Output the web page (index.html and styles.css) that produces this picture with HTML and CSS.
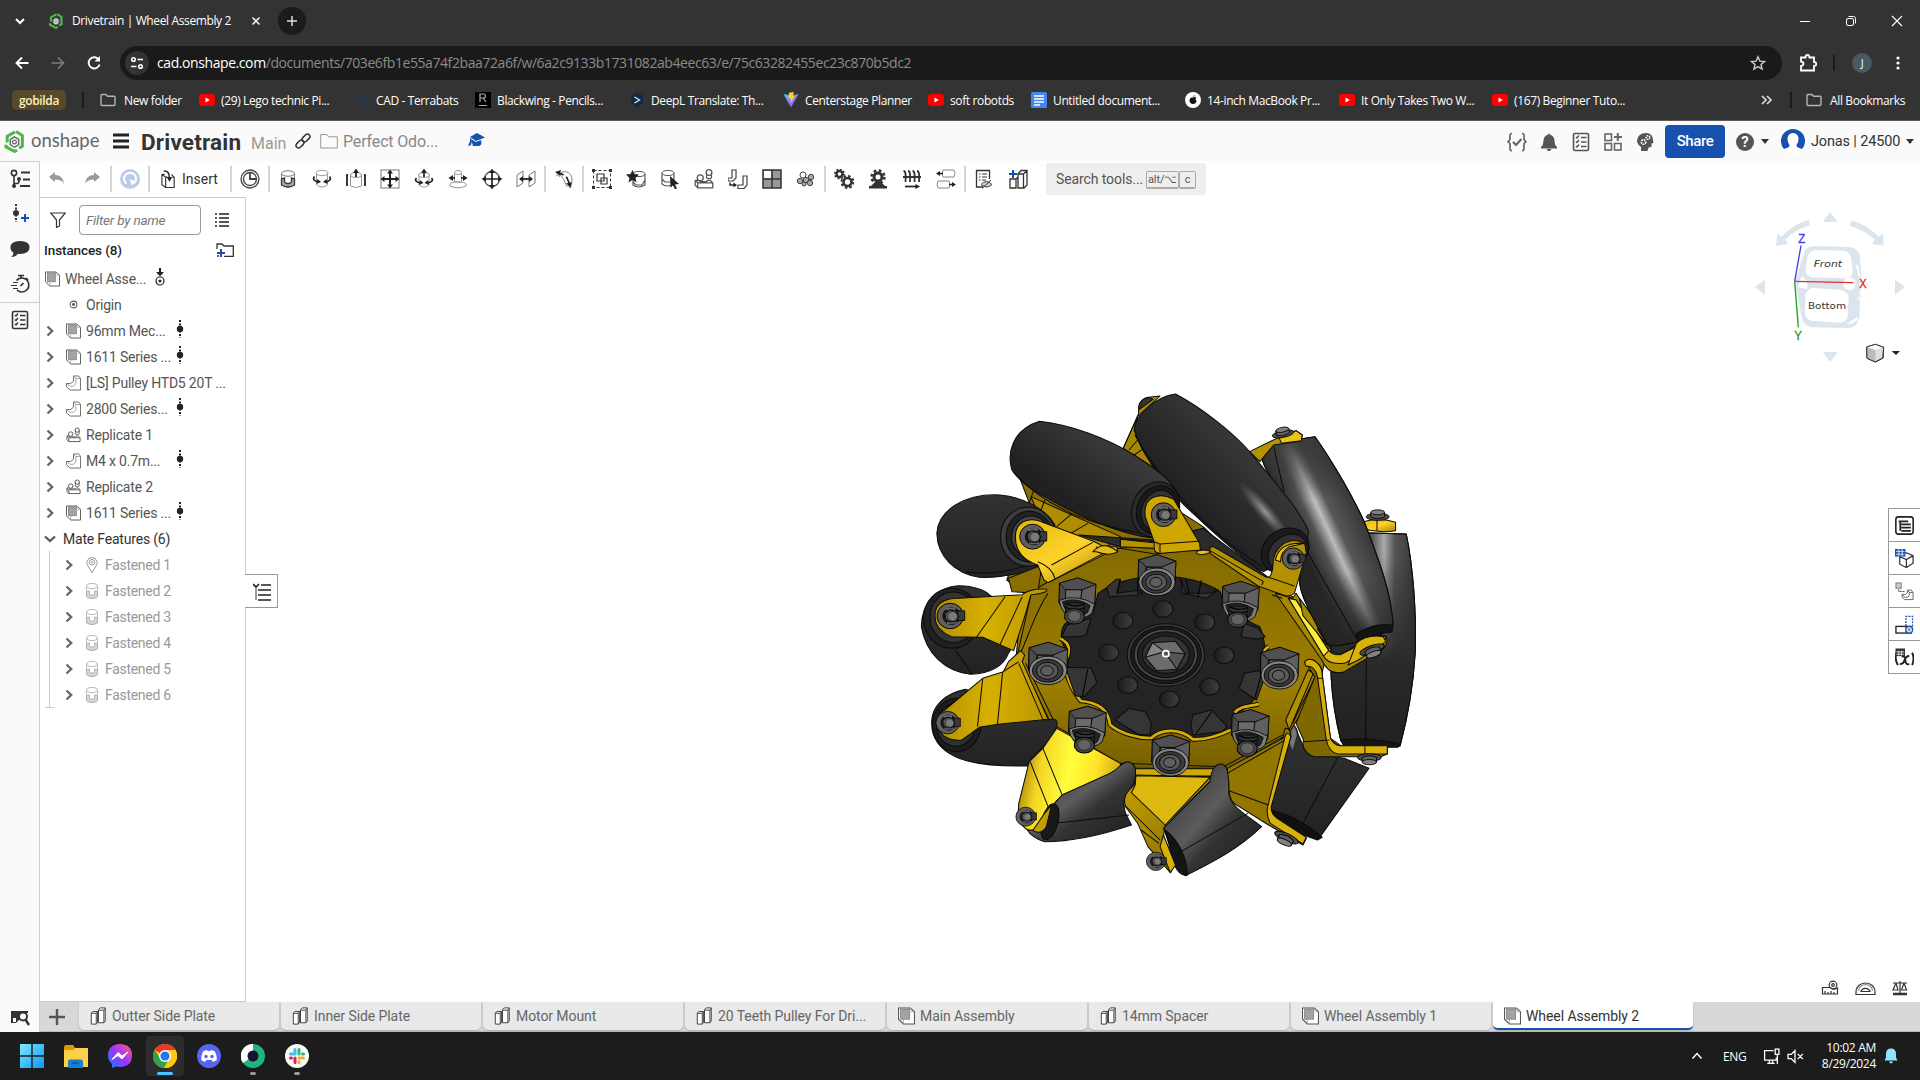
FILE: index.html
```html
<!DOCTYPE html>
<html lang="en">
<head>
<meta charset="utf-8">
<title>Drivetrain | Wheel Assembly 2</title>
<link rel="stylesheet" href="styles.css">
</head>
<body>
<svg class="defs" aria-hidden="true">
  <defs>
    <linearGradient id="gRubber" x1="0" y1="1" x2="1" y2="0"><stop offset=".35" stop-color="#212121"/><stop offset=".75" stop-color="#3d3d3d"/><stop offset="1" stop-color="#444"/></linearGradient>
    <linearGradient id="gDeep" x1="0" y1="0" x2="0" y2="1"><stop offset="0" stop-color="#323232"/><stop offset="1" stop-color="#222"/></linearGradient>
    <linearGradient id="gBright" x1="0" y1="0" x2="1" y2="1"><stop offset="0" stop-color="#e2b90a"/><stop offset=".5" stop-color="#ffd22a"/><stop offset="1" stop-color="#a38300"/></linearGradient>
    <linearGradient id="gLemon" x1="0" y1=".3" x2="1" y2=".5"><stop offset="0" stop-color="#8f7300"/><stop offset=".22" stop-color="#f5d524"/><stop offset=".5" stop-color="#ffff3c"/><stop offset=".75" stop-color="#ffe428"/><stop offset="1" stop-color="#cda907"/></linearGradient>
    <linearGradient id="gGold" x1="0" y1="0" x2="1" y2="0"><stop offset="0" stop-color="#b39000"/><stop offset=".45" stop-color="#d8b000"/><stop offset="1" stop-color="#b99600"/></linearGradient>
    <linearGradient id="gOlive" x1="0" y1="0" x2="1" y2="1"><stop offset="0" stop-color="#c7a200"/><stop offset="1" stop-color="#7c6400"/></linearGradient>
    <linearGradient id="gRing" x1="0" y1="0" x2="0" y2="1"><stop offset="0" stop-color="#856b00"/><stop offset=".6" stop-color="#9c7e00"/><stop offset="1" stop-color="#735c00"/></linearGradient>
    <linearGradient id="gSheen" gradientUnits="userSpaceOnUse" x1="1170" y1="510" x2="1350" y2="430"><stop offset="0" stop-color="#242424"/><stop offset=".28" stop-color="#555"/><stop offset=".46" stop-color="#c8c8c8"/><stop offset=".62" stop-color="#5a5a5a"/><stop offset="1" stop-color="#383838"/></linearGradient>
    <linearGradient id="gFade" x1="0" y1="0" x2="0" y2="1"><stop offset="0" stop-color="#3a3a3a"/><stop offset=".3" stop-color="#2b2b2b" stop-opacity=".05"/><stop offset=".65" stop-color="#2b2b2b" stop-opacity=".1"/><stop offset="1" stop-color="#242424"/></linearGradient>
    <linearGradient id="gSide" gradientUnits="userSpaceOnUse" x1="1290" y1="0" x2="1500" y2="0"><stop offset="0" stop-color="#252525"/><stop offset=".38" stop-color="#555"/><stop offset=".55" stop-color="#aaa"/><stop offset=".7" stop-color="#555"/><stop offset="1" stop-color="#333"/></linearGradient>
    <linearGradient id="gDown" x1="0" y1="0" x2="0" y2="1"><stop offset=".1" stop-color="#2a2a2a" stop-opacity="0"/><stop offset=".6" stop-color="#2a2a2a"/><stop offset="1" stop-color="#202020"/></linearGradient>
    <linearGradient id="gGrey" x1="0" y1="0" x2="1" y2="1"><stop offset="0" stop-color="#2c2c2c"/><stop offset=".45" stop-color="#5c5c5c"/><stop offset=".6" stop-color="#333"/><stop offset="1" stop-color="#1d1d1d"/></linearGradient>
    <radialGradient id="gGlow"><stop offset="0" stop-color="#aaa" stop-opacity=".85"/><stop offset="1" stop-color="#777" stop-opacity="0"/></radialGradient>
    <linearGradient id="gHole" x1="0" y1="0" x2="1" y2="0"><stop offset="0" stop-color="#1c1c1c"/><stop offset="1" stop-color="#3e3e3e"/></linearGradient>
    <linearGradient id="gWin" x1="0" y1="0" x2="1" y2="1"><stop offset="0" stop-color="#7ceafd"/><stop offset="1" stop-color="#0b95f4"/></linearGradient>
    <linearGradient id="gMsg" x1="0" y1="1" x2="1" y2="0"><stop offset="0" stop-color="#0a80ff"/><stop offset=".5" stop-color="#a033ff"/><stop offset="1" stop-color="#ff5f6d"/></linearGradient>
    <linearGradient id="gVite" x1="0" y1="0" x2="1" y2="1"><stop offset="0" stop-color="#41d1ff"/><stop offset="1" stop-color="#bd34fe"/></linearGradient>
  </defs>

  <symbol id="mark" viewBox="0 0 20 22"><path d="M10.500 1.800 3 6v6M1.800 14v2.200L10 20.500l2.500-1.300" fill="none" stroke="#4db848" stroke-width="2.900"/><path d="M11.500 1.500l6 3.800v10.200l-3 1.800" fill="none" stroke="#4db848" stroke-width="2.900"/><path d="M10 6.500 14 9v5l-4 2.500L6 14V9z" fill="#fff" stroke="#666" stroke-width="1.400"/><circle cx="10" cy="11.500" r="1.800" fill="none" stroke="#666" stroke-width="1.200"/></symbol>
  <symbol id="yt" viewBox="0 0 16 16"><rect y="2" width="16" height="12" rx="3.200" fill="red"/><path d="M6.500 5.500 10.800 8l-4.300 2.500z" fill="#fff"/></symbol>
  <symbol id="dir" viewBox="0 0 16 16"><path d="M1 3.500q0-1 1-1h4l1.600 1.800H14q1 0 1 1V12.500q0 1-1 1H2q-1 0-1-1z" fill="none" stroke="#b4b4b4" stroke-width="1.400"/></symbol>

  <symbol id="chev" viewBox="0 0 10 12"><path d="M2.500 1.500 7.200 6l-4.700 4.500" fill="none" stroke="#666" stroke-width="2.300"/></symbol>
  <symbol id="asm" viewBox="0 0 16 16"><path d="M.5.500h11l4 3.500v11.500H5L.5 11z" fill="#fff" stroke="#555"/><path d="M5 11.500v4M11.500.5v2M12 4h3.500" stroke="#999" fill="none" stroke-width=".8"/><rect x="2.500" y="1.500" width="8.500" height="9.500" fill="#a3a3a3" stroke="#777" stroke-width=".7"/></symbol>
  <symbol id="part" viewBox="0 0 16 16"><path d="M8 .5h5.500l2 2.500v12.500H4.500L.5 12V8.500H5L8 6z" fill="#fff" stroke="#666"/><path d="M8 .5l2.500 2.700h5M10.500 3.200V9L8 11.500H4.500l-4-3" fill="none" stroke="#888" stroke-width=".8"/></symbol>
  <symbol id="rep" viewBox="0 0 16 16"><path d="M1 9h3l1 1h5l1-1h2l2 2v4H3l-2-2zM3 11h12M3 11v4M1 9l2 2" fill="none" stroke="#555"/><circle cx="5" cy="7" r="2.400" fill="#fff" stroke="#555"/><circle cx="12" cy="2.800" r="2.300" fill="#fff" stroke="#555"/><path d="M10 3v4q2 1.500 4 0V3" fill="none" stroke="#555" stroke-width=".9"/></symbol>
  <symbol id="dof" viewBox="0 0 14 18"><circle cx="7" cy="9" r="3.200" fill="#222"/><path d="M7 0v18" stroke="#222" stroke-width="2" stroke-dasharray="2 1.500"/></symbol>
  <symbol id="fast" viewBox="0 0 16 18"><path d="M2.500 4v10.500q5.500 4 11 0V4z" fill="#fff" stroke="#bbb"/><path d="M2.500 9.500v5q5.500 4 11 0v-5l-3-.5v2.500L9.500 13h-3l-1-1.500V9z" fill="#d6d6d6" stroke="#aaa" stroke-width=".8"/><ellipse cx="8" cy="4" rx="5.500" ry="2.600" fill="#fff" stroke="#bbb"/></symbol>
  <symbol id="pin" viewBox="0 0 16 18"><path d="M8 16.500 4 10Q2.500 7.500 3 5.500 4.200 1.500 8 1.500t5 4q.5 2-1 4.500z" fill="#fff" stroke="#999"/><circle cx="8" cy="6.300" r="2.800" fill="none" stroke="#999"/><circle cx="8" cy="6.300" r="1" fill="#999"/></symbol>
  <symbol id="studio" viewBox="0 0 18 20"><path d="M1 6.500 3 5h5v12l-1.500 2H1zM1 7h5.500v12M6.500 7 8 5M9 3l2-2h5.500v14.500L15 17.500H9zM9 3.500h6v14M15 3.500l1.500-2" fill="#fff" stroke="#444" stroke-width="1.100"/></symbol>

  <symbol id="nutA" viewBox="0 0 120 130" overflow="visible"><path d="M5 18 60 2l55 20-3 68-20 20H26L3 84z" fill="#4a4a4a" stroke="#000" stroke-width="3"/><path d="M5 18 60 2l55 20-43 18-45-1z" fill="#505050" stroke="#000" stroke-width="2"/><path d="M29 40h43l-4 36H26z" fill="#6d6d6d"/><path d="M73 40 115 22l-3 66-44-12z" fill="#5f5f5f" stroke="#000" stroke-width="2"/><path d="M5 18l22 21-3 38-20 6z" fill="#4c4c4c" stroke="#000" stroke-width="2"/><ellipse cx="59" cy="85" rx="54" ry="42" fill="#868686" stroke="#000" stroke-width="2.500"/><ellipse cx="58" cy="86" rx="44" ry="34" fill="#3a3a3a" stroke="#000" stroke-width="2.500"/><ellipse cx="57" cy="86" rx="31" ry="25" fill="#585858" stroke="#000" stroke-width="2.500"/><ellipse cx="56" cy="86" rx="18" ry="15" fill="#5d5d5d" stroke="#000" stroke-width="2.500"/></symbol>
  <symbol id="nutB" viewBox="0 0 120 150" overflow="visible"><path d="M5 18 60 2l55 20-4 70-20 14H26L3 80z" fill="#4a4a4a" stroke="#000" stroke-width="3"/><path d="M5 18 60 2l55 20-43 18-50-1z" fill="#505050" stroke="#000" stroke-width="2"/><path d="M24 39h48l-2 32-48 3z" fill="#6b6b6b"/><path d="M73 40 115 22l-4 62-42-10z" fill="#606060" stroke="#000" stroke-width="2"/><path d="M4 72q52-22 107 12l-8 28q-20 18-51 18Q10 118 4 72z" fill="#7c7c7c" stroke="#000" stroke-width="2.500"/><path d="M14 76q42-16 84 12l-8 22q-16 14-40 14Q20 110 14 76z" fill="#242424" stroke="#000" stroke-width="2"/><path d="M24 80h56l-2 50H22z" fill="#333"/><path d="M26 82q26 14 54 2M24 94q26 14 54 2M23 106q27 14 54 2" fill="none" stroke="#050505" stroke-width="4"/><ellipse cx="50" cy="122" rx="30" ry="24" fill="#474747" stroke="#000" stroke-width="3"/><ellipse cx="50" cy="121" rx="20" ry="17" fill="#626262" stroke="#111" stroke-width="2"/></symbol>
  <symbol id="clip" viewBox="-45 -45 90 90" overflow="visible"><circle r="40" fill="#606060" stroke="#000" stroke-width="3"/><circle cx="4" r="27" fill="#1e1e1e" stroke="#000" stroke-width="2"/><path d="M22-16h22v30H22z" fill="#3a3a3a"/><path d="M-14-22 12-24V-8M-10 22 20 20" stroke="#666" stroke-width="7" fill="none"/><path d="M-16-8-2-19 16-16 26 2 16 18-4 18-15 8z" fill="#5b5b5b" stroke="#000" stroke-width="3"/><circle cx="7" cy="1" r="15" fill="#7a7a7a" stroke="#111" stroke-width="2"/></symbol>
  <symbol id="stud" viewBox="-45 -30 90 60" overflow="visible"><ellipse cy="4" rx="40" ry="13" fill="#4c4c4c" stroke="#000" stroke-width="3"/><path d="M-24-12v16q24 12 48 0v-16z" fill="#606060" stroke="#000" stroke-width="3"/><ellipse cy="-12" rx="24" ry="9" fill="#808080" stroke="#000" stroke-width="3"/></symbol>
</svg>

<div class="screen">
<header class="chrome">
  <div class="strip">
    <svg class="i10 tabsearch" viewBox="0 0 10 10"><path d="M1 3l4 4 4-4" fill="none" stroke="#fff" stroke-width="2"/></svg>
    <svg class="fav"><use href="#mark"/></svg>
    <span class="tabtitle">Drivetrain | Wheel Assembly 2</span>
    <svg class="i10 tabclose" viewBox="0 0 10 10"><path d="M1.500 1.500l7 7M8.500 1.500l-7 7" stroke="#e6e6e6" stroke-width="1.700"/></svg>
    <span class="newtab"><svg class="i10" viewBox="0 0 10 10"><path d="M5 0v10M0 5h10" stroke="#ddd" stroke-width="1.500"/></svg></span>
    <span class="grow"></span>
    <span class="winbtns">
      <svg viewBox="0 0 12 12"><path d="M1 6.500h10" stroke="#fff"/></svg>
      <svg viewBox="0 0 12 12"><rect x="1.500" y="3.500" width="7" height="7" rx="1.500" fill="none" stroke="#fff"/><path d="M3.500 1.500h5q2 0 2 2v5" fill="none" stroke="#fff"/></svg>
      <svg viewBox="0 0 12 12"><path d="M1 1l10 10M11 1 1 11" stroke="#fff" stroke-width="1.100"/></svg>
    </span>
  </div>
  <div class="nav">
    <svg class="i16" viewBox="0 0 16 16"><path d="M14.500 8H3M8 2.500 2.500 8 8 13.500" fill="none" stroke="#fff" stroke-width="1.900"/></svg>
    <svg class="i16" viewBox="0 0 16 16"><path d="M1.500 8H13M8 2.500 13.500 8 8 13.500" fill="none" stroke="#7d7d7d" stroke-width="1.700"/></svg>
    <svg class="i16" viewBox="0 0 16 16"><path d="M13 4.800A5.600 5.600 0 1 0 13.600 9.500" fill="none" stroke="#fff" stroke-width="1.900"/><path d="M14 1v5.500H8.500z" fill="#fff"/></svg>
    <div class="omni">
      <span class="site"><svg viewBox="0 0 14 14"><g fill="none" stroke="#fff" stroke-width="1.500"><circle cx="3.500" cy="3.500" r="1.800"/><path d="M7.500 3.500H13M1 10.500h5.500"/><circle cx="10.500" cy="10.500" r="1.800"/></g></svg></span>
      <span class="url"><b>cad.onshape.com</b>/documents/703e6fb1e55a74f2baa72a6f/w/6a2c9133b1731082ab4eec63/e/75c63282455ec23c870b5dc2</span>
      <svg class="i16" viewBox="0 0 16 16"><path d="M8 1.800l1.900 4.300 4.600.4-3.500 3 1.100 4.600L8 11.600l-4.100 2.500L5 9.500l-3.500-3 4.600-.4z" fill="none" stroke="#ccc" stroke-width="1.400"/></svg>
    </div>
    <svg class="i18 ext" viewBox="0 0 18 18"><path d="M2 3.500h4.500Q6.500 1 8.500 1t2 2.500H15V8q2.300 0 2.300 2T15 12v4.500H2V12q2.500-.5 2.500-2.300T2 7.500z" fill="none" stroke="#fff" stroke-width="1.800"/></svg>
    <i class="bar navbar"></i>
    <span class="me">J</span>
    <svg class="i16" viewBox="0 0 16 16"><g fill="#fff"><circle cx="8" cy="3" r="1.600"/><circle cx="8" cy="8" r="1.600"/><circle cx="8" cy="13" r="1.600"/></g></svg>
  </div>
  <div class="marks">
    <span class="grp">gobilda</span><i class="bar"></i>
    <span><svg><use href="#dir"/></svg><em class="far">New folder</em></span>
    <span><svg><use href="#yt"/></svg>(29) Lego technic Pi...</span>
    <span><svg viewBox="0 0 16 16"><path d="M1.500 3 5 13 8 5l3 8 3.500-10" fill="none" stroke="#27364a" stroke-width="2.600"/></svg>CAD - Terrabats</span>
    <span><svg viewBox="0 0 16 16"><rect width="16" height="16" fill="#000"/><path d="M5 10V2h3.500q2 0 2 2t-2 2H5m3 0 3 4M4 13.500h8" fill="none" stroke="#aaa" stroke-width="1.200"/></svg>Blackwing - Pencils...</span>
    <span><svg viewBox="0 0 16 16"><path d="M8 .5l6 3.500v7L8 15.500 2 11V4z" fill="#0f2b46"/><path d="M5.500 5l5 3-5 3" fill="none" stroke="#d8e6f5" stroke-width="1.300"/></svg>DeepL Translate: Th...</span>
    <span><svg viewBox="0 0 16 16"><path d="M.5 2 8 15.500 15.500 2 8 3.500z" fill="url(#gVite)"/><path d="M6 .8l5-.8-1 4h2L7.500 11l.5-4.500H5.500z" fill="#ffcf2b"/></svg>Centerstage Planner</span>
    <span><svg><use href="#yt"/></svg>soft robotds</span>
    <span><svg viewBox="0 0 16 16"><rect width="16" height="16" rx="1.500" fill="#4285f4"/><path d="M3 4h10M3 7h10M3 10h10M3 13h6" stroke="#fff" stroke-width="1.500"/></svg>Untitled document...</span>
    <span><svg viewBox="0 0 16 16"><circle cx="8" cy="8" r="8" fill="#fff"/><path d="M8 5.500q2-1.200 3.400.3-1.600 1.500.3 3.500Q10.200 12.600 8 11.800 5.700 12.700 4.500 9.300 4.200 5 8 5.500zM8 5q0-1.500 1.600-2Q9.700 4.500 8 5z" fill="#111"/></svg>14-inch MacBook Pr...</span>
    <span><svg><use href="#yt"/></svg>It Only Takes Two W...</span>
    <span><svg><use href="#yt"/></svg>(167) Beginner Tuto...</span>
    <span><svg viewBox="0 0 16 16"><path d="M3 4l4 4-4 4M8 4l4 4-4 4" fill="none" stroke="#ddd" stroke-width="1.700"/></svg></span><i class="bar"></i>
    <span><svg><use href="#dir"/></svg><em class="far">All Bookmarks</em></span>
  </div>
</header>

<div class="dochead">
  <svg class="logo"><use href="#mark"/></svg><span class="brand">onshape</span>
  <svg class="burger" viewBox="0 0 16 16"><path d="M0 2h16M0 8h16M0 14h16" stroke="#222" stroke-width="2.800"/></svg>
  <h1>Drivetrain</h1><span class="ws">Main</span>
  <svg class="i16 link" viewBox="0 0 16 16"><g fill="none" stroke="#333" stroke-width="1.500"><rect x="6.500" y="2.500" width="9" height="5" rx="2.500" transform="rotate(-45 11 5)"/><rect x=".5" y="8.500" width="9" height="5" rx="2.500" transform="rotate(-45 5 11)"/></g></svg>
  <svg class="i18 crumb" viewBox="0 0 18 16"><path d="M.7 15V1.500h6l1.800 2.300h8.800V15z" fill="none" stroke="#999"/></svg><span class="folder">Perfect Odo...</span>
  <svg class="i18 cap" viewBox="0 0 18 18"><path d="M10 1l8 4.500-9 3.500L3 5z" fill="#1651b0"/><path d="M4 7l5 3 5-2 .5 4-2 2H6z" fill="#1651b0"/><path d="M3 5v4l-2 5 3-1 1-4" fill="#1651b0"/></svg>
  <span class="grow"></span>
  <div class="acts">
    <svg viewBox="0 0 20 20"><path d="M5 1.500Q2.500 1.500 3 5t-2.500 5Q3.500 10 3 14.500T5 18.500M15 1.500q2.500 0 2 3.500t2.500 5q-3 0-2.500 4.500t-2 4" fill="none" stroke="#666" stroke-width="1.700"/><path d="M6 10l3 3 5.500-6" fill="none" stroke="#666" stroke-width="2.200"/></svg>
    <svg viewBox="0 0 20 20"><path d="M10 1l1 1.800Q15.500 4 15.500 9q0 4 2.500 6v1.500H2V15q2.500-2 2.500-6Q4.500 4 9 2.800zM7.500 17h5L11 19H9z" fill="#555"/></svg>
    <svg viewBox="0 0 20 20"><rect x="2.500" y="1.500" width="15" height="17" rx="1.500" fill="none" stroke="#555" stroke-width="1.600"/><path d="M5 5l1 1 2-2.500M5 9.500l1 1L8 8M5 14l1 1 2-2.500M10 5.500h5.500M10 10h5.500M10 14.500h5.500" fill="none" stroke="#555" stroke-width="1.500"/></svg>
    <svg viewBox="0 0 20 20"><g fill="none" stroke="#666" stroke-width="1.600"><rect x="2" y="2" width="6.500" height="6.500"/><rect x="2" y="11.500" width="6.500" height="6.500"/><rect x="11.500" y="11.500" width="6.500" height="6.500"/><path d="M14.800 1v8M11 5h8" stroke-width="2"/></g></svg>
    <svg viewBox="0 0 20 20"><path d="M11 1q6.500 0 7 7l.5 3-2 .5v3.500l-3 .5-1 3.500H6v-4Q2 12 2 8.500 3 1 11 1z" fill="#555"/><g fill="none" stroke="#fff" stroke-width="1.600"><circle cx="8.500" cy="10" r="2.200" stroke-dasharray="1.600 .8"/><circle cx="13" cy="5.500" r="1.800" stroke-dasharray="1.400 .7"/></g></svg>
  </div>
  <span class="share">Share</span>
  <span class="help">?</span><i class="caret"></i>
  <svg class="avatar" viewBox="0 0 24 24"><circle cx="12" cy="12" r="12" fill="#1651b0"/><path d="M12 4q5.500 0 5.500 6.500 0 3-2 5.500l.5 2 6 2.500-5 4.500H7l-5-4.500L8 18l.5-2q-2-2.500-2-5.500Q6.500 4 12 4z" fill="#fff"/></svg>
  <span class="user">Jonas | 24500</span><i class="caret"></i>
</div>

<div class="work">
  <aside class="rail">
    <svg viewBox="0 0 20 20"><g fill="none" stroke="#333" stroke-width="1.600"><circle cx="4" cy="4" r="2.600"/><path d="M4 7v11M4 14.500h3q2 0 2-3"/></g><circle cx="9" cy="10" r="2" fill="#333"/><circle cx="4" cy="17" r="2" fill="#333"/><path d="M11 3.500h9M13 10.500h7M10 17h10" stroke="#333" stroke-width="2"/></svg>
    <svg viewBox="0 0 20 20"><circle cx="6" cy="9" r="3" fill="#333"/><path d="M6 0v18" stroke="#333" stroke-width="2" stroke-dasharray="2 1.500"/><path d="M11 14h8M15 10v8" stroke="#1651b0" stroke-width="2"/></svg>
    <svg viewBox="0 0 20 20"><path d="M10 2q9.500 0 9.500 6.500T10 15l-2-.3Q6 18 1 18q2.500-1.500 2.500-4.500Q.5 12 .5 8.500.5 2 10 2z" fill="#333"/></svg>
    <svg viewBox="0 0 20 20"><g fill="none" stroke="#333" stroke-width="1.700"><path d="M6.500 6.500A7 7 0 1 1 7 16"/><path d="M8 1.500h6M11 1.500V4M16 4l2 2M10.500 12l3-3"/><path d="M3 8.500h5M1 11.500h6M3 14.500h5" stroke-width="1.200"/></g></svg>
    <i></i>
    <svg viewBox="0 0 20 20"><rect x="2.500" y="1.500" width="15" height="17" rx="1.500" fill="none" stroke="#333" stroke-width="1.600"/><path d="M5 5l1 1 2-2.500M5 9.500l1 1L8 8M5 14l1 1 2-2.500M10 5.500h5.500M10 10h5.500M10 14.500h5.500" fill="none" stroke="#333" stroke-width="1.500"/></svg>
    <span class="grow"></span>
    <svg class="railfind" viewBox="0 0 20 20"><path d="M1 4h17v2H14q-5 1-5 7l-3 3H1z" fill="#333"/><rect x="3" y="11" width="3" height="4" fill="#fff"/><circle cx="13" cy="9.500" r="4" fill="#fff" stroke="#333" stroke-width="2"/><path d="M15.500 12.500 19 18" stroke="#333" stroke-width="2.500"/></svg>
  </aside>
  <div class="main">
    <div class="tools">
      <svg viewBox="0 0 20 20"><path d="M2 8l6-5v3q8 0 9 9-2-4.500-9-4.500V13z" fill="#999"/></svg>
      <svg viewBox="0 0 20 20"><path d="M18 8l-6-5v3q-8 0-9 9 2-4.500 9-4.500V13z" fill="#999"/></svg><i></i>
      <svg viewBox="0 0 20 20"><circle cx="10" cy="10" r="10" fill="#b9cde8"/><path d="M6.500 14.500A6 6 0 1 1 13.500 14.500" fill="none" stroke="#fff" stroke-width="2"/><path d="M9.500 10.500 16 12l-4 4.500z" fill="#fff"/></svg><i></i>
      <span class="insert"><svg viewBox="0 0 18 20"><path d="M2 5h3M2 5v11l4 3h9V8l-3-3M2 5l4 3h2M6 8v11M13 8h2" fill="none" stroke="#333" stroke-width="1.200"/><path d="M4 1.500q6-.5 6 7.500" fill="none" stroke="#222" stroke-width="1.600"/><path d="M7 8h6l-3 5z" fill="#222"/></svg>Insert</span><i></i>
      <svg viewBox="0 0 20 20"><g fill="#eee" stroke="#444" stroke-width="1.300"><circle cx="10" cy="10" r="9"/><circle cx="10" cy="10" r="6.500" fill="#fff"/><path d="M10 3.500V10h6.500" fill="none" stroke-width="1.800"/></g></svg><i></i>
      <svg viewBox="0 0 20 20"><path d="M3.500 5v11q6.500 4 13 0V5z" fill="#fff" stroke="#777"/><path d="M3.500 10v6q6.500 4 13 0v-6l-3-1v4l-2 1.500h-3L6.500 13V9z" fill="#aaa" stroke="#333" stroke-width="1.300"/><ellipse cx="10" cy="4.500" rx="6.500" ry="2.700" fill="#fff" stroke="#777"/></svg>
      <svg viewBox="0 0 20 20"><path d="M4.500 4v12q5.500 4 11 0V4" fill="#fff" stroke="#999"/><ellipse cx="10" cy="4" rx="6" ry="2.700" fill="#fff" stroke="#999"/><path d="M2.500 7.500q-3 4 4 5.500M17.500 7.500q3 4-4 5.500" fill="none" stroke="#222" stroke-width="1.700"/><path d="M5.500 10l3.500 3-4.500 2zM14.500 10 11 13l4.500 2z" fill="#222"/></svg>
      <svg viewBox="0 0 20 20"><path d="M4.500 6v11q5.500 3 11 0V6" fill="#fff" stroke="#999"/><ellipse cx="10" cy="6" rx="5.500" ry="2.500" fill="#fff" stroke="#999"/><path d="M1 5v12M19 5v12M10 2v6" stroke="#222" stroke-width="1.800"/><path d="M10-.5l3 4.500H7z" fill="#222"/></svg>
      <svg viewBox="0 0 20 20"><rect x="1" y="1" width="18" height="18" fill="#fff" stroke="#777"/><path d="M10 3v14M3 10h14" stroke="#222" stroke-width="2"/><path d="M10 .5l3 4H7zM10 19.500l3-4H7zM.5 10l4-3v6zM19.500 10l-4-3v6z" fill="#222"/></svg>
      <svg viewBox="0 0 20 20"><path d="M5 6v10q5 4 10 0V6" fill="#fff" stroke="#999"/><ellipse cx="10" cy="6" rx="5.500" ry="2.500" fill="#fff" stroke="#999"/><path d="M2.500 9q-3 3.500 4 5M17.500 9q3 3.500-4 5M10 2v6" fill="none" stroke="#222" stroke-width="1.700"/><path d="M10-.5l3 4.500H7zM6 11l3.500 3-4.500 2zM14 11l-3.500 3 4.500 2z" fill="#222"/></svg>
      <svg viewBox="0 0 20 20"><path d="M6.500 4v9h7V4M2 15v2q8 3.500 16 0v-2q-1-1.500-4.500-2h-7Q3 13.500 2 15z" fill="#fff" stroke="#999"/><ellipse cx="10" cy="3.500" rx="3.500" ry="2" fill="#fff" stroke="#999"/><path d="M2.500 9H7M13 9h4.500" stroke="#222" stroke-width="1.700"/><path d="M.5 9 5 6v6zM19.500 9 15 6v6z" fill="#222"/></svg>
      <svg viewBox="0 0 20 20"><circle cx="10" cy="10" r="7.500" fill="none" stroke="#555" stroke-width="1.300"/><path d="M10 2v16M2 10h16" stroke="#222" stroke-width="1.700"/><path d="M10-.5l3 4.500H7zM10 20.500l3-4.500H7zM-.5 10 4 7v6zM20.500 10 16 7v6z" fill="#222"/></svg>
      <svg viewBox="0 0 20 20"><path d="M1 6l6-4v12l-6 4zM13 6l6-4v12l-6 4z" fill="none" stroke="#777"/><path d="M4 10h12" stroke="#222" stroke-width="1.800"/><path d="M3 10l4-3v6zM17 10l-4-3v6z" fill="#222"/></svg><i></i>
      <svg viewBox="0 0 20 20"><path d="M2 7q4-4 8 4l3 7M8 3q8-2 10 6 1 6-3 10M5 8l3-5" fill="none" stroke="#888"/><path d="M5 4q6 2 8 5l2.500 6" fill="none" stroke="#222" stroke-width="1.600" stroke-dasharray="5 3 9"/><path d="M1 3l6-2-1.500 5.500zM17 19l-5-4.500 5.500-1.500z" fill="#222"/></svg><i></i>
      <svg viewBox="0 0 20 20"><rect x="1.500" y="1.500" width="17" height="17" fill="none" stroke="#333" stroke-dasharray="3 2"/><path d="M0 0h3v3H0zM17 0h3v3h-3zM0 17h3v3H0zM17 17h3v3h-3z" fill="#333"/><path d="M5 5h7v7H5zM9 9h6v6H9z" fill="#fff" stroke="#333" stroke-width="1.200"/></svg>
      <svg viewBox="0 0 20 20"><path d="M7 5v11q5 4 12 0V5M7 13l3 3h6l3-5" fill="#fff" stroke="#555" stroke-width="1.200"/><ellipse cx="13" cy="5" rx="6" ry="2.600" fill="#fff" stroke="#555"/><path d="M6.500 1l2 4 4.500.5L9.500 9l1 4.500-4-2.500-4 2.500 1-4.500L0 5.500 4.500 5z" fill="#222"/></svg>
      <svg viewBox="0 0 20 20"><path d="M2 4v11q5 4 12 0V4M2 10l3 3h6l3-3" fill="#fff" stroke="#555" stroke-width="1.200"/><ellipse cx="8" cy="4" rx="6" ry="2.600" fill="#fff" stroke="#555"/><path d="M10 7l9 8-4 .5 2 4-2 .8-2-4-2.500 2.500z" fill="#222"/></svg>
      <svg viewBox="0 0 16 16"><use href="#rep"/></svg>
      <svg viewBox="0 0 20 20"><path d="M4 1h4v8l-3 3H0V9h4zM15 7h4v9l-3 3.500h-6V16h5z" fill="#fff" stroke="#444" stroke-width="1.200"/><path d="M2 13.500V16h4" fill="none" stroke="#222" stroke-width="1.400"/><path d="M9 16l-3.500-2.500v5z" fill="#222"/></svg>
      <svg viewBox="0 0 20 20"><rect x="1" y="1" width="18" height="18" fill="#999"/><path d="M2 2h7v7H2z" fill="#fff"/><path d="M1 1h18v18H1zM10 1v18M1 10h18" fill="none" stroke="#333" stroke-width="1.500"/></svg>
      <svg viewBox="0 0 20 20"><g fill="#aaa" stroke="#444"><circle cx="7" cy="6" r="3" fill="#fff"/><circle cx="4" cy="12" r="2.700"/><circle cx="10" cy="11" r="2.700"/><circle cx="15" cy="8" r="2.700"/><circle cx="14" cy="14" r="2.700"/><circle cx="8" cy="15" r="2"/></g></svg><i></i>
      <svg viewBox="0 0 20 20"><g fill="none" stroke="#333"><circle cx="5.500" cy="5" r="3" stroke-width="2.400"/><circle cx="5.500" cy="5" r="4.500" stroke-width="2" stroke-dasharray="1.800 1.700"/><circle cx="13.500" cy="13" r="4" stroke-width="2.600"/><circle cx="13.500" cy="13" r="6" stroke-width="2" stroke-dasharray="2.500 2.200"/></g></svg>
      <svg viewBox="0 0 20 20"><g fill="none" stroke="#333"><circle cx="10" cy="8" r="4" stroke-width="3"/><circle cx="10" cy="8" r="6.500" stroke-width="2.500" stroke-dasharray="2.600 2.500"/></g><path d="M1 19.500V17h2l4-4h6l4 4h2v2.500z" fill="#333"/></svg>
      <svg viewBox="0 0 20 20"><path d="M1.500 2q3 0 2 11M6 2q3 0 2 11M10.500 2q3 0 2 11M15 2q3 0 2 11M1 8h18" fill="none" stroke="#333" stroke-width="1.800"/><path d="M3 17.500h11" stroke="#222" stroke-width="1.700"/><path d="M18 17.500l-4.500-2.500v5z" fill="#222"/></svg>
      <svg viewBox="0 0 20 20"><path d="M7 1h11q2 3.500 0 7H7q-2-3.500 0-7zM2 12h11q2 3.500 0 7H2q-2-3.500 0-7z" fill="#fff" stroke="#888"/><path d="M3 4.500h4M13 15.500h4" stroke="#222" stroke-width="1.600"/><path d="M0 4.500 4 2v5zM20 15.500l-4-2.500v5z" fill="#222"/></svg><i></i>
      <svg viewBox="0 0 20 20"><path d="M9 18H2.500V1.500h13V10" fill="#fff" stroke="#333" stroke-width="1.300"/><path d="M5 5h1.500M8 5h5M5 8h1.500M8 8h5M5 11h1.500M8 11h4" stroke="#333"/><path d="M7 15.500q5-6 11 0-5 5-11 0z" fill="#ccc" stroke="#444"/><path d="M8 19.500 17 11" stroke="#333"/></svg>
      <svg viewBox="0 0 20 20"><path d="M2 10h6v9H2zM10 5l3-3.500h6V16l-3 3h-6zM10 5h5.500v14M15.500 5 19 1.500M8 10l2-2" fill="#fff" stroke="#333" stroke-width="1.300"/><path d="M5 1v8M1 5h8" stroke="#1651b0" stroke-width="2"/></svg>
      <span class="search">Search tools...<kbd>alt/⌥</kbd><kbd>c</kbd></span>
    </div>
    <div class="body">
      <section class="panel">
        <div class="filter">
          <svg viewBox="0 0 16 16"><path d="M.7 1h14.600L9.500 8v6l-3 1.500V8z" fill="none" stroke="#333" stroke-width="1.200"/></svg>
          <span class="field">Filter by name</span>
          <svg viewBox="0 0 16 16"><path d="M1 2h2M1 6h2M1 10h2M1 14h2M5 2h10M5 6h10M5 10h10M5 14h10" stroke="#222" stroke-width="1.700"/></svg>
        </div>
        <div class="insthead"><b>Instances (8)</b><svg viewBox="0 0 18 14"><path d="M1 6V1h5l2 2h9.300v10.300H8M1 13h2" fill="none" stroke="#333" stroke-width="1.300"/><path d="M5 6v8M1 10h8" stroke="#1651b0" stroke-width="2"/></svg></div>
        <div class="row root"><svg class="i16"><use href="#asm"/></svg><span class="nm">Wheel Asse...</span><svg class="dof" viewBox="0 0 14 18"><circle cx="7" cy="13" r="4" fill="none" stroke="#222" stroke-width="1.200"/><circle cx="7" cy="13" r="1.500" fill="#222"/><path d="M7 0v5" stroke="#222" stroke-width="2"/><path d="M3 4h8L7 8.500z" fill="#222"/></svg></div>
        <div class="row origin"><svg viewBox="0 0 8 8"><circle cx="4" cy="4" r="3" fill="none" stroke="#555" stroke-width=".9"/><circle cx="4" cy="4" r="1.300" fill="#555"/></svg><span>Origin</span></div>
        <div class="row"><svg class="chev"><use href="#chev"/></svg><svg class="i16"><use href="#asm"/></svg><span class="nm">96mm Mec...</span><svg class="dof"><use href="#dof"/></svg></div>
        <div class="row"><svg class="chev"><use href="#chev"/></svg><svg class="i16"><use href="#asm"/></svg><span class="nm">1611 Series ...</span><svg class="dof"><use href="#dof"/></svg></div>
        <div class="row"><svg class="chev"><use href="#chev"/></svg><svg class="i16"><use href="#part"/></svg><span>[LS] Pulley HTD5 20T ...</span></div>
        <div class="row"><svg class="chev"><use href="#chev"/></svg><svg class="i16"><use href="#part"/></svg><span class="nm">2800 Series...</span><svg class="dof"><use href="#dof"/></svg></div>
        <div class="row"><svg class="chev"><use href="#chev"/></svg><svg class="i16"><use href="#rep"/></svg><span>Replicate 1</span></div>
        <div class="row"><svg class="chev"><use href="#chev"/></svg><svg class="i16"><use href="#part"/></svg><span class="nm">M4 x 0.7m...</span><svg class="dof"><use href="#dof"/></svg></div>
        <div class="row"><svg class="chev"><use href="#chev"/></svg><svg class="i16"><use href="#rep"/></svg><span>Replicate 2</span></div>
        <div class="row"><svg class="chev"><use href="#chev"/></svg><svg class="i16"><use href="#asm"/></svg><span class="nm">1611 Series ...</span><svg class="dof"><use href="#dof"/></svg></div>
        <div class="row mates"><svg class="open" viewBox="0 0 12 8"><path d="M1 1.500 6 6l5-4.500" fill="none" stroke="#555" stroke-width="2.200"/></svg><span>Mate Features (6)</span></div>
        <div class="kids">
          <div class="row"><svg class="chev"><use href="#chev"/></svg><svg class="mi"><use href="#pin"/></svg><span>Fastened 1</span></div>
          <div class="row"><svg class="chev"><use href="#chev"/></svg><svg class="mi"><use href="#fast"/></svg><span>Fastened 2</span></div>
          <div class="row"><svg class="chev"><use href="#chev"/></svg><svg class="mi"><use href="#fast"/></svg><span>Fastened 3</span></div>
          <div class="row"><svg class="chev"><use href="#chev"/></svg><svg class="mi"><use href="#fast"/></svg><span>Fastened 4</span></div>
          <div class="row"><svg class="chev"><use href="#chev"/></svg><svg class="mi"><use href="#fast"/></svg><span>Fastened 5</span></div>
          <div class="row"><svg class="chev"><use href="#chev"/></svg><svg class="mi"><use href="#fast"/></svg><span>Fastened 6</span></div>
        </div>
      </section>
      <div class="view">
        <svg class="scene" viewBox="246 197 1674 805">
          <g transform="translate(900 380) scale(.34439 .33333)" stroke="#0c0c0c" stroke-width="3" stroke-linejoin="round">
            <!-- far roller on the right -->
            <path d="M1345 458 1470 462C1490 560 1500 700 1496 820 1490 920 1475 1010 1452 1098L1280 1082C1255 980 1240 850 1260 700Z" fill="url(#gSide)"/>
            <path d="M1345 458 1470 462C1490 560 1500 700 1496 820 1490 920 1475 1010 1452 1098L1280 1082C1255 980 1240 850 1260 700Z" fill="url(#gDown)"/>
            <path d="M1354 840 1352 1085" fill="none"/><path d="M1280 1080q80-10 170 12l-4 10H1290z" fill="#151515"/>
            <path d="M1345 425q50-14 94 2v25q-50 8-94-6z" fill="url(#gBright)"/><path d="M1385 420v32" fill="none"/><use href="#stud" x="1342" y="382" width="90" height="50"/>
            <!-- lower right roller -->
            <path d="M1112 1040C1125 1020 1150 1030 1155 1060L1180 1120 1290 1135 1362 1165 1215 1378 1075 1295Z" fill="url(#gDeep)"/>
            <path d="M1112 1040C1125 1020 1150 1030 1152 1065L1140 1110Z" fill="#777" stroke="none"/>
            <path d="M1270 1135 1170 1330" fill="none"/><path d="M1078 1290q80 20 148 82l-14 8q-70-20-134-80z" fill="#101010"/>
            <!-- plate between the rollers -->
            <path d="M350 300 385 395 310 600 360 640 440 740 600 600 1000 560 880 440 760 360Z" fill="#8a6f00"/>
            <path d="M380 350 640 470 600 500 430 470ZM420 360 400 420M500 400 455 440M545 430 480 470M395 310 375 370" fill="#b08d00"/>
            <path d="M520 465 740 480 880 445 950 500 1080 600 980 580 850 500 640 500Z" fill="#2b2b2b"/>
            <path d="M355 650 440 600 570 510 640 505 740 522 870 508 910 520 1060 610 1140 650 1245 800 1220 900 1130 1060 950 1170 900 1190 680 1185 450 1055 335 850Z" fill="url(#gRing)"/>
            <path d="M430 640C390 700 370 780 345 830M455 1040 640 1150 940 1160 1120 1060M350 860 430 1020M365 850 450 1030M1140 1030 1220 860M660 1165H910" fill="none"/>
            <path d="M655 1166h255v22H675z" fill="#d1a900"/><path d="M350 840l90 195-14 6-85-190z" fill="#c6a000"/>
            <path d="M1130 1050 1200 880 1185 870 1120 1020z" fill="#b08e00"/>
            <!-- pulley -->
            <path d="M575 640C620 605 690 590 745 588 810 588 880 600 930 635L945 690 1045 740C1062 790 1066 820 1050 870 1050 940 1020 985 975 1000L960 1045C920 1070 880 1078 855 1076 820 1045 750 1045 730 1072 690 1072 640 1060 612 1030 600 980 570 965 525 960 490 900 480 860 492 820 460 790 465 750 480 730L560 700Z" fill="#242424"/>
            <path d="M465 775C495 790 495 810 482 840 478 890 500 930 525 963 575 968 603 985 610 1034 640 1060 690 1075 730 1074 760 1045 815 1045 850 1078 890 1080 930 1065 960 1050M972 998C990 975 1020 980 1042 972M1070 800C1050 810 1055 840 1052 860" fill="none" stroke="#0c0c0c" stroke-width="14"/>
            <path d="M465 775C495 790 495 810 482 840 478 890 500 930 525 963 575 968 603 985 610 1034 640 1060 690 1075 730 1074 760 1045 815 1045 850 1078 890 1080 930 1065 960 1050M972 998C990 975 1020 980 1042 972M1070 800C1050 810 1055 840 1052 860" fill="none" stroke="#d6ae06" stroke-width="8"/>
            <g fill="#353535"><path d="M600 622 628 598 640 598 630 640 700 630 690 645 608 650Z"/><path d="M815 595 830 640 900 640 925 630 890 655 820 640Z"/><path d="M470 770 485 735 555 715 540 765 520 770Z"/><path d="M990 770 1000 730 1040 745 1060 770 1040 778Z"/><path d="M480 862 555 864 572 908 535 950 510 948Z"/><path d="M1040 872 1065 875 1035 960 985 925 1000 880Z"/><path d="M625 1020 665 985 712 995 730 1030 725 1065 690 1062Z"/><path d="M845 1035 850 1005 905 990 950 1040 935 1055 850 1065Z"/></g>
            <path d="M640 598l-10 40M690 600v40M875 600l-10 50M545 868l-15 80M860 1060l45-65M1050 880l-20 75M700 645 720 600M830 600l10 40" fill="none" stroke="#000"/>
            <g fill="url(#gHole)"><ellipse cx="763" cy="687" rx="29" ry="25"/><ellipse cx="647" cy="722" rx="29" ry="25"/><ellipse cx="885" cy="727" rx="29" ry="25"/><ellipse cx="606" cy="818" rx="29" ry="25"/><ellipse cx="941" cy="826" rx="29" ry="25"/><ellipse cx="661" cy="915" rx="29" ry="25"/><ellipse cx="899" cy="920" rx="29" ry="25"/><ellipse cx="782" cy="958" rx="29" ry="25"/></g>
            <ellipse cx="772" cy="825" rx="112" ry="94" fill="#3c3c3c"/><ellipse cx="772" cy="825" rx="103" ry="86" fill="#1b1b1b"/><ellipse cx="772" cy="824" rx="92" ry="77" fill="#4a4a4a"/><ellipse cx="772" cy="824" rx="83" ry="69" fill="#202020"/><ellipse cx="772" cy="824" rx="68" ry="56" fill="#333"/>
            <path d="M712 832 733 788 800 784 828 822 804 868 745 872Z" fill="#6c6c6c"/><path d="M712 832 733 788 768 815Z" fill="#858585"/><path d="M768 815 828 822 804 868Z" fill="#555"/>
            <circle cx="772" cy="821" r="9" fill="#555" stroke="#fff" stroke-width="5"/>
            <!-- right hand brackets -->
            <path d="M1175 845C1195 825 1228 855 1226 885L1250 1075 1280 1097 1415 1097 1415 1122 1395 1130 1205 1130C1180 1125 1165 1100 1172 1080L1150 1030 1205 890Z" fill="#806800"/>
            <path d="M1175 845C1195 825 1228 855 1226 885L1250 1075Q1260 1097 1280 1097H1415V1122H1270Q1245 1115 1238 1080L1212 890Q1205 855 1178 858Z" fill="#d8b208"/><path d="M1350 1097v27M1212 895h15M1172 1085l75-5" fill="none"/>
            <use href="#stud" x="1318" y="1110" width="90" height="52" transform="rotate(180 1363 1136)"/>
            <path d="M1090 640 1140 655 1150 640 1250 800 1240 815 1280 822 1380 765 1412 768 1415 785 1405 805 1290 875C1260 885 1238 872 1225 840Z" fill="#a88800"/><path d="M1128 655 1150 660 1245 810Q1252 826 1280 824L1385 768 1412 770 1404 790 1290 850Q1240 855 1228 825Z" fill="#d9b512"/><path d="M1128 655 1150 660 1245 812 1230 828Z" fill="#fbec3a"/>
            <path d="M1160 655l50 70 12 10-10 12 38 60-80-100z" fill="#a88800"/><path d="M1205 710l14 5 2 12-12 4z" fill="#fff" stroke="none"/>
            <!-- long roller, upper right -->
            <path d="M1050 230 1085 190 1205 170C1260 250 1320 360 1350 430 1390 540 1425 630 1432 735 1400 770 1350 785 1310 790 1270 800 1250 800 1240 790 1190 700 1160 640 1160 600L1180 440C1130 360 1060 290 1050 230Z" fill="url(#gSheen)"/>
            <path d="M1050 230 1085 190 1205 170C1260 250 1320 360 1350 430 1390 540 1425 630 1432 735 1400 770 1350 785 1310 790 1270 800 1250 800 1240 790 1190 700 1160 640 1160 600L1180 440C1130 360 1060 290 1050 230Z" fill="url(#gFade)"/><path d="M1085 200 1115 335M1180 510 1325 775" fill="none"/>
            <path d="M1325 760q60-35 106-24l-2 20q-60 5-100 34z" fill="#141414"/><path d="M1325 790q30-28 78-20l8 15-80 55-30 15z" fill="#d9b30a"/><use href="#stud" x="1328" y="790" width="90" height="56" transform="rotate(160 1373 815)"/>
            <path d="M1015 215 1100 172 1150 152 1168 165 1165 182 1085 195 1045 245Z" fill="#b59300"/><path d="M1100 172 1150 152 1168 165 1165 182 1108 190Z" fill="#eac516"/><use href="#stud" x="1070" y="135" width="82" height="48" transform="rotate(-12 1110 155)"/>
            <!-- top roller -->
            <path d="M693 100Q690 60 722 52L755 48 690 110 688 150 745 268 648 205Z" fill="#a88800"/><path d="M648 205 690 110 683 150 720 220M665 210l25-30M680 225l35-25" fill="none"/><path d="M693 80q5-25 30-28l12 6-40 30z" fill="#333"/>
            <path d="M800 42C870 80 960 150 1020 220 1090 310 1160 390 1185 450 1190 500 1150 530 1055 575 1020 560 900 450 820 370 760 300 700 220 680 150 680 110 740 50 800 42Z" fill="url(#gRubber)"/>
            <ellipse cx="1060" cy="395" rx="115" ry="24" fill="url(#gGlow)" stroke="none" transform="rotate(50 1060 395)"/><path d="M682 165C760 310 900 460 1050 560" fill="none"/>
            <ellipse cx="1118" cy="512" rx="75" ry="62" transform="rotate(-42 1118 512)" fill="#1b1b1b"/><ellipse cx="1126" cy="518" rx="62" ry="50" transform="rotate(-42 1126 518)" fill="#303030"/>
            <path d="M1083 555C1083 500 1130 465 1175 490L1180 520 1145 640Q1130 652 1115 646L1040 618 900 520 900 502 910 500 1060 590Q1080 600 1083 555Z" fill="#b39100"/><path d="M1090 540Q1100 485 1175 490L1130 500Q1105 515 1105 545Z" fill="#e9c318"/><path d="M1070 592 1145 618M905 515 1055 605 1050 615" fill="none"/><use href="#clip" x="1106" y="498" width="72" height="76"/>
            <!-- second roller -->
            <path d="M405 124C500 135 600 175 680 225 740 265 790 300 808 345 815 400 790 450 740 475 640 465 500 400 420 350 370 325 345 300 325 270 310 220 325 150 405 124Z" fill="url(#gRubber)"/><path d="M328 275C420 380 560 440 720 462" fill="none"/>
            <ellipse cx="742" cy="388" rx="68" ry="84" transform="rotate(20 742 388)" fill="#2a2a2a"/><ellipse cx="748" cy="390" rx="60" ry="74" transform="rotate(20 748 390)" fill="#1a1a1a"/><ellipse cx="752" cy="392" rx="50" ry="62" transform="rotate(20 752 392)" fill="#333"/>
            <path d="M712 410C705 350 750 335 795 358L870 490 872 510 760 520Q740 522 738 505L640 500 640 478 738 485Z" fill="#cda600"/><path d="M640 478 738 488V505L640 500ZM755 492 868 484M738 485 755 492V520" fill="#b59200"/><use href="#clip" x="725" y="358" width="80" height="92"/>
            <!-- third roller -->
            <path d="M107 460C110 390 190 340 290 345 360 352 420 385 450 435L430 550C380 575 300 595 230 592 160 580 108 530 107 460Z" fill="url(#gDeep)"/><path d="M190 575Q290 590 400 545" fill="none"/>
            <ellipse cx="372" cy="470" rx="80" ry="89" fill="#3e3e3e"/><ellipse cx="376" cy="470" rx="68" ry="76" fill="#222"/><ellipse cx="380" cy="470" rx="56" ry="62" fill="#444"/>
            <path d="M412 555 400 640 325 635 315 595Z" fill="#8a6f00"/>
            <path d="M335 470C335 425 375 410 410 425L560 483Q580 492 590 500L630 500 632 515 600 520 430 608 418 600 400 555C355 540 335 510 335 470Z" fill="url(#gBright)"/><path d="M400 545Q440 560 450 595M440 555 560 487M430 608 590 520 570 500" fill="none"/><use href="#clip" x="343" y="424" width="84" height="92"/>
            <!-- fourth roller -->
            <path d="M62 740C62 670 110 620 170 617 220 617 250 635 260 645L330 700 340 780 315 820C300 860 260 880 205 883 130 875 75 820 62 740Z" fill="url(#gDeep)"/><ellipse cx="150" cy="715" rx="82" ry="90" fill="#202020"/><ellipse cx="155" cy="712" rx="68" ry="76" fill="#333"/><path d="M160 810 208 880" fill="none"/>
            <path d="M102 710C98 660 150 653 170 655L355 644Q375 625 425 627 435 638 380 645L365 700 330 812 240 772 150 770C115 755 102 735 102 710Z" fill="url(#gGold)"/><path d="M305 650 220 775M355 650 290 795M380 645 340 830" fill="none"/><use href="#clip" x="103" y="662" width="86" height="92"/>
            <!-- fifth roller -->
            <path d="M92 1030C90 980 130 940 190 928L430 1020C460 1010 465 1030 440 1070 420 1110 390 1110 370 1158 280 1160 200 1150 160 1130 120 1110 92 1080 92 1030Z" fill="url(#gDeep)"/><ellipse cx="165" cy="1035" rx="70" ry="80" fill="#1d1d1d"/><ellipse cx="162" cy="1035" rx="56" ry="64" fill="#303030"/>
            <path d="M108 1020Q110 1000 130 990L240 895 300 875 315 845 350 812 362 825 355 845 430 1018 285 1033 230 1042 180 1080C125 1085 105 1050 108 1020Z" fill="url(#gGold)"/><path d="M240 897 225 1040M298 877 283 1033M300 875 345 845M345 850 415 1018" fill="none"/><use href="#clip" x="100" y="985" width="76" height="86"/>
            <!-- sixth roller -->
            <path d="M455 1045 640 1150 640 1165 480 1243Q445 1262 440 1290L425 1345 385 1355C350 1345 340 1320 345 1270L375 1145 415 1105Z" fill="url(#gLemon)"/><path d="M415 1105 470 1243M378 1145 430 1280" fill="none"/>
            <path d="M470 1245 610 1180C640 1165 640 1145 665 1145 690 1155 685 1180 680 1210 665 1240 640 1250 655 1300L672 1335C600 1360 500 1385 420 1385 395 1380 375 1360 370 1350L430 1350 445 1275Z" fill="url(#gGrey)"/><path d="M450 1330 665 1305" fill="none"/><ellipse cx="435" cy="1325" rx="24" ry="55" transform="rotate(14 435 1325)" fill="#191919"/><path d="M440 1275 425 1340Q410 1365 385 1352L420 1300Z" fill="#c39e00"/><use href="#clip" x="333" y="1272" width="64" height="76"/>
            <!-- seventh roller -->
            <path d="M685 1185 900 1190 905 1200 770 1335 765 1370 800 1450 785 1478 720 1400 690 1330 655 1280C645 1250 660 1235 680 1215Z" fill="url(#gOlive)"/><path d="M685 1187 900 1192 770 1335 672 1238 683 1215Z" fill="#ddb80e"/><path d="M652 1275 755 1380M700 1350l52 40" fill="none"/>
            <path d="M765 1345 900 1205C905 1160 920 1150 935 1152 955 1160 957 1190 955 1240 960 1280 1000 1300 1050 1340 980 1410 900 1450 830 1487 810 1480 800 1460 785 1400Z" fill="url(#gGrey)"/><path d="M790 1430 1010 1300" fill="none"/><path d="M770 1350Q830 1400 835 1485 810 1490 795 1450Z" fill="#141414"/><path d="M765 1365 800 1455 785 1478 755 1400Z" fill="#d8b10b"/><use href="#clip" x="712" y="1410" width="62" height="68"/>
            <!-- lower right bracket -->
            <path d="M950 1165 1112 1075 1118 1045Q1135 1045 1135 1070L1075 1285 1085 1315 1180 1375 1170 1395 1070 1335 985 1280C955 1265 955 1240 955 1210Z" fill="#927600"/><path d="M1118 1070Q1125 1050 1135 1070L1078 1280Q1076 1300 1095 1315L1180 1372 1170 1392 1075 1330Q1060 1300 1070 1270Z" fill="#d8b20c"/><path d="M955 1232 1070 1275M950 1180 1115 1082" fill="none"/><use href="#stud" x="1078" y="1352" width="84" height="56" transform="rotate(205 1120 1378)"/>
            <!-- nuts -->
            <path d="M560 515Q590 480 632 515 610 530 570 515ZM860 515Q880 505 905 515 880 530 862 520ZM1080 645l30 10" fill="#e3bd12"/>
            <use href="#nutA" x="688" y="522" width="118" height="128"/><use href="#nutA" x="368" y="785" width="126" height="132"/><use href="#nutA" x="1041" y="800" width="124" height="130"/><use href="#nutA" x="728" y="1060" width="118" height="134"/>
            <use href="#nutB" x="457" y="592" width="118" height="144"/><use href="#nutB" x="931" y="602" width="118" height="144"/><use href="#nutB" x="486" y="977" width="118" height="146"/><use href="#nutB" x="959" y="987" width="118" height="146"/>
          </g>
          <!-- view cube -->
          <g transform="translate(1720 200) scale(.33333)">
            <g fill="#dde5ec"><path d="M308 66 330 37 353 66ZM308 456 330 486 353 456ZM105 261 135 239V284ZM555 261 525 239V284Z"/><path d="M266 59 270 75Q225 90 196 118L204 132 168 137 172 101 184 110Q220 72 266 59ZM394 61 390 77Q435 92 464 118L456 132 491 137 489 101 476 110Q440 74 394 61Z"/><path d="M250 165Q255 138 285 138L390 141Q418 145 420 175L424 230 418 350Q412 384 385 384L275 382Q248 378 245 350L225 245Z"/></g>
            <path d="M262 170Q270 150 290 150L370 152Q392 156 394 178L398 215Q396 235 375 235L280 232Q258 230 256 210ZM256 285Q262 262 285 264L365 270Q386 275 386 295L383 350Q378 368 355 368L275 362Q256 358 255 340ZM415 190 418 310M380 372 412 350 414 360 392 373ZM245 228 262 245 262 268 235 262Z" fill="#fff"/><circle cx="388" cy="251" r="19" fill="#fff"/><path d="M410 195Q425 240 416 300" fill="none" stroke="#fff" stroke-width="6"/><path d="M417 230v65" stroke="#888" stroke-dasharray="3 3" stroke-width="2"/>
            <g fill="none" stroke-width="4"><path d="M224 244 243 137" stroke="#4040e8"/><path d="M224 244 400 248" stroke="#e03030"/><path d="M224 244 235 382" stroke="#18a818"/></g>
            <text x="235" y="130" class="axis az" textLength="21" lengthAdjust="spacingAndGlyphs">Z</text><text x="418" y="264" class="axis ax" textLength="22" lengthAdjust="spacingAndGlyphs">X</text><text x="223" y="421" class="axis ay" textLength="23" lengthAdjust="spacingAndGlyphs">Y</text>
            <text x="281" y="202" class="face fi" textLength="85" lengthAdjust="spacingAndGlyphs">Front</text><text x="264" y="327" class="face" textLength="114" lengthAdjust="spacingAndGlyphs">Bottom</text>
            <path d="M440 441 466 433 491 442 489 474 466 486 441 475Z" fill="#ddd" stroke="#333" stroke-width="3"/><path d="M440 441 466 450V486L441 475Z" fill="#bbb"/><path d="M440 441 466 433 491 442 466 450Z" fill="#fff"/><path d="M440 441 466 433 491 442 489 474 466 486 441 475Z" fill="none" stroke="#333" stroke-width="3"/><path d="M515 453h25l-12 12z" fill="#222"/>
          </g>
          <!-- measuring tools -->
          <g fill="none" stroke="#333" stroke-width="1.200"><path d="M1822.500 987.500h8q2 3 7 .5v6h-15zM1825 994v-3M1828 994v-2M1831 994v-3M1834 994v-2"/><circle cx="1833" cy="985" r="3.800"/><circle cx="1833" cy="985" r="1.300"/><path d="M1856 994.500v-3a9.500 8.500 0 0 1 19 0v3zM1861 991.500a4.700 4.500 0 0 1 9 0z"/><path d="M1858.500 991a7 6.500 0 0 1 14 0" stroke="#888"/><path d="M1893 983h14M1900 981v12M1896 983l-3 7h5l-2-7M1904 983l-2.500 7h5l-2.500-7"/><path d="M1893 994h14" stroke-width="2.500"/></g>
        </svg>
        <span class="flyout"><svg viewBox="0 0 18 18"><path d="M0 1l3 3 3-3" fill="none" stroke="#222" stroke-width="1.700"/><path d="M3 5v12" stroke="#999" stroke-width="2"/><path d="M8 2h10M5 7h13M5 12h13M5 17h13" stroke="#222" stroke-width="1.300"/></svg></span>
        <div class="dock">
          <span><svg viewBox="0 0 18 18"><rect x=".8" y=".8" width="16.400" height="16.400" rx="2.500" fill="none" stroke="#222" stroke-width="1.500"/><path d="M3.500 5h9M6 8h9M6 11h9M6 14h9M5 5v9" stroke="#222" stroke-width="1.700"/></svg></span>
          <span><svg viewBox="0 0 20 20"><path d="M12 4l7 3v8l-7 4.500L5 16V7zM5 8l7 3 7-4M12 11v8" fill="#fff" stroke="#333" stroke-width="1.300"/><rect width="11" height="8" fill="#1651b0"/><path d="M1 2.500h9M1 5.500h9M4 0v8M7.500 0v8" stroke="#cfe2ff"/></svg></span>
          <span><svg viewBox="0 0 20 20"><rect x="1" y="1" width="5.500" height="5.500" fill="#ccc" stroke="#777"/><path d="M4 8v2h6" fill="none" stroke="#1651b0" stroke-width="1.300" stroke-dasharray="2 1"/><path d="M13 8.500h4l2 2.500v7.500h-9L7.500 16v-3H11l2-1.500zM13 8.500l2 2.500h4M15 11v3.500L13.500 16H10l-2.500-3" fill="#fff" stroke="#666"/></svg></span>
          <span><svg viewBox="0 0 20 20"><rect x="1" y="12" width="16" height="7" fill="#fff" stroke="#222" stroke-width="1.400"/><path d="M11.500 18V1.500h7V16" fill="none" stroke="#1651b0" stroke-width="1.300" stroke-dasharray="2 1.200"/><circle cx="15" cy="15.500" r="3.500" fill="#ddd" stroke="#1651b0" stroke-width="1.200"/><circle cx="15" cy="15.500" r="1.200" fill="#777"/></svg></span>
          <span><svg viewBox="0 0 20 20"><path d="M2 4Q-1 11 3 18M18 5q3 6 0 13M7 9q4-1 4 4t4 4M15 8q-4 1-5 5t-5 4" fill="none" stroke="#222" stroke-width="2"/><rect x=".5" y=".5" width="10" height="8" fill="#333"/><path d="M1.500 4h8M1.500 6.500h8M4 3v5M7 3v5" stroke="#fff" stroke-width=".8"/></svg></span>
        </div>
      </div>
    </div>
  </div>
</div>

<div class="doctabs">
  <span class="add"><svg viewBox="0 0 16 16"><path d="M8 0v16M0 8h16" stroke="#555" stroke-width="2.400"/></svg></span>
  <span class="dt"><svg><use href="#studio"/></svg>Outter Side Plate</span>
  <span class="dt"><svg><use href="#studio"/></svg>Inner Side Plate</span>
  <span class="dt"><svg><use href="#studio"/></svg>Motor Mount</span>
  <span class="dt"><svg><use href="#studio"/></svg>20 Teeth Pulley For Dri...</span>
  <span class="dt"><svg><use href="#asm"/></svg>Main Assembly</span>
  <span class="dt"><svg><use href="#studio"/></svg>14mm Spacer</span>
  <span class="dt"><svg><use href="#asm"/></svg>Wheel Assembly 1</span>
  <span class="dt on"><svg><use href="#asm"/></svg>Wheel Assembly 2</span>
</div>

<footer class="taskbar">
  <span><svg viewBox="0 0 24 24"><path d="M0 0h11.300v11.300H0zM12.700 0H24v11.300H12.700zM0 12.700h11.300V24H0zM12.700 12.700H24V24H12.700z" fill="url(#gWin)"/></svg></span>
  <span><svg viewBox="0 0 24 24"><path d="M0 4q0-3 2-3h7l2 3h12v5H0z" fill="#d99a06"/><path d="M0 6h9l2-2h13v19H0z" fill="#ffcf48"/><path d="M4 24v-6q0-2.500 2.500-2.500h10q2.500 0 2.500 2.500v6z" fill="#1380d0"/><path d="M8 19h7" stroke="#0b5a9c" stroke-width="1.500"/></svg></span>
  <span><svg viewBox="0 0 24 24"><path d="M12 0Q24 .5 24 11.500T12 23l-4-.6L4 24v-4Q0 17 0 11.500 0 .5 12 0z" fill="url(#gMsg)"/><path d="M4 15.500 10 8.500l4 3.500 6-4-6 7-4-3.500z" fill="#fff" stroke="#fff"/></svg></span>
  <span class="cur"><svg viewBox="0 0 24 24"><circle cx="12" cy="12" r="12" fill="#fdc912"/><path d="M12 12 1.600 6A12 12 0 0 1 22.400 6z" fill="#e33b2e"/><path d="M1.600 6A12 12 0 0 0 11 24l5.500-9L7 14z" fill="#2da24c"/><path d="M12 6h10.400A12 12 0 0 1 11 24l5.500-10z" fill="#fdc912"/><circle cx="12" cy="12" r="6" fill="#fff"/><circle cx="12" cy="12" r="4.600" fill="#2a77ea"/></svg></span>
  <span><svg viewBox="0 0 24 24"><circle cx="12" cy="12" r="12" fill="#5865f2"/><path d="M6 7.500q2-1.300 4-1.500l.6 1h2.800l.6-1q2 .2 4 1.500 2 4 1.800 8.500-2 1.500-4 2l-1-2H9.200l-1 2q-2-.5-4-2Q4 11.500 6 7.500z" fill="#fff"/><circle cx="9" cy="12.500" r="1.700" fill="#5865f2"/><circle cx="15" cy="12.500" r="1.700" fill="#5865f2"/></svg></span>
  <span class="run"><svg viewBox="0 0 24 24"><circle cx="12" cy="12" r="12" fill="#20b57d"/><path d="M12 0v12L2 19A12 12 0 0 1 12 0z" fill="#fff"/><circle cx="12" cy="12" r="5.500" fill="#141432"/></svg></span>
  <span class="run"><svg viewBox="0 0 24 24"><circle cx="12" cy="12" r="12" fill="#f7f7f7"/><g stroke-width="3" stroke-linecap="round"><path d="M10 5.500V10M5.500 10H10" stroke="#36c5f0"/><path d="M14 5.500V10M18.500 10h-1" stroke="#2eb67d"/><path d="M14 14h4.500M14 18.500v-1" stroke="#ecb22e"/><path d="M10 14v4.500M5.500 14h1" stroke="#e01e5a"/></g></svg></span>
  <span class="grow"></span>
  <svg class="up" viewBox="0 0 12 12"><path d="M1.500 8.500 6 3.500l4.500 5" fill="none" stroke="#fff" stroke-width="1.500"/></svg>
  <b class="lang">ENG</b>
  <svg class="net" viewBox="0 0 16 16"><g fill="none" stroke="#fff" stroke-width="1.200"><path d="M10 2.500H1.500v9h11V9M4 14.500h7M6 12v2.500M9 12v2.500"/><rect x="11.500" y="1" width="3.500" height="5"/><path d="M13.500 6v9"/></g></svg>
  <svg class="vol" viewBox="0 0 16 16"><path d="M1 6h3l3.500-3.500v11L4 10H1zM10 5.500l5 5M15 5.500l-5 5" fill="none" stroke="#fff" stroke-width="1.200"/></svg>
  <span class="clock">10:02 AM<br>8/29/2024</span>
  <svg class="bell" viewBox="0 0 14 16"><path d="M7 .5q5 0 5 5.500v3.500l1.500 3h-13l1.500-3V6Q2 .5 7 .5zM5 13.500h4q-.5 2-2 2t-2-2z" fill="#8fe4ff"/></svg>
</footer>
</div>
</body>
</html>
```
FILE: styles.css
```css
* { box-sizing: border-box; }
body { margin: 0; background: #fff; font-family: Roboto, "Liberation Sans", sans-serif; color: #333; overflow: hidden; }
svg { display: block; flex: none; }
.defs { position: absolute; width: 0; height: 0; }
.screen { width: 1920px; height: 1080px; display: flex; flex-direction: column; }
.grow { flex: 1; }
.i10 { width: 10px; height: 10px; }
.i16 { width: 16px; height: 16px; }
.i18 { width: 18px; height: 18px; }

/* browser frame */
.chrome { height: 121px; background: #333; color: #fff; font-family: "Open Sans", "Noto Sans", sans-serif; font-size: 12px; letter-spacing: -.37px; border-bottom: 1px solid #5a5a5a; }
.strip { height: 41px; display: flex; align-items: center; }
.tabsearch { margin-left: 15px; }
.fav { width: 16px; height: 16px; margin-left: 23px; }
.tabtitle { margin-left: 8px; width: 179px; white-space: nowrap; }
.newtab { width: 28px; height: 28px; border-radius: 50%; background: #1b1b1b; display: flex; align-items: center; justify-content: center; margin-left: 17px; }
.winbtns { display: flex; gap: 34px; margin-right: 17px; }
.winbtns svg { width: 12px; height: 12px; }
.nav { height: 43px; display: flex; align-items: center; padding-left: 14px; }
.nav > .i16 + .i16 { margin-left: 20px; }
.omni { margin-left: 18px; width: 1662px; height: 34px; border-radius: 17px; background: #1a1a1a; display: flex; align-items: center; padding: 0 16px 0 5px; }
.site { width: 24px; height: 24px; border-radius: 50%; background: #333; display: flex; align-items: center; justify-content: center; }
.site svg { width: 14px; height: 14px; }
.url { flex: 1; margin-left: 8px; font-size: 14px; letter-spacing: -.42px; color: #8b8b8b; white-space: nowrap; }
.url b { font-weight: 400; color: #fff; }
.ext { margin-left: 17px; }
.bar { width: 2px; height: 16px; background: #1b1b1b; }
.navbar { margin-left: 16px; }
.me { width: 20px; height: 20px; border-radius: 50%; background: #455a64; font-size: 11px; display: flex; align-items: center; justify-content: center; margin: 0 18px 0 17px; }
.marks { height: 32px; padding: 0 0 0 12px; display: grid; align-items: center; white-space: nowrap; grid-template-columns: 70px 18px 99px 155px 121px 154px 154px 145px 103px 154px 154px 153px 267px 31px 16px 110px; }
.marks span { display: flex; align-items: center; gap: 6px; }
.marks svg { width: 16px; height: 16px; }
.marks em { font-style: normal; margin-left: 2px; }
.marks .grp { width: 54px; height: 20px; border-radius: 5px; background: #574a2c; color: #fdf0b8; justify-content: center; font-weight: 600; }

/* document header */
.dochead { height: 40px; background: #fafafa; display: flex; align-items: center; padding-left: 4px; white-space: nowrap; }
.logo { width: 21px; height: 23px; }
.brand { margin-left: 6px; width: 70px; font: 18.500px Lato, sans-serif; color: #666; padding-bottom: 3px; }
.burger { width: 16px; height: 16px; margin-left: 12px; }
.dochead h1 { margin: 0 0 0 12px; width: 110px; font-size: 22.500px; font-weight: 700; letter-spacing: .2px; padding-top: 2px; }
.ws { width: 44px; font-size: 16px; color: #999; padding-top: 5px; }
.crumb { margin-left: 9px; }
.folder { margin-left: 5px; width: 124px; font-size: 16px; letter-spacing: -.15px; color: #888; }
.acts { display: flex; gap: 12px; padding-top: 2px; }
.acts svg { width: 20px; height: 20px; }
.share { margin-left: 10px; width: 60px; height: 33px; background: #1651b0; color: #fff; border-radius: 4px; font-size: 15px; font-weight: 500; letter-spacing: -.4px; line-height: 33px; text-align: center; }
.help { margin: 2px 0 0 11px; width: 18px; height: 18px; border-radius: 50%; background: #555; color: #fafafa; font-weight: 700; font-size: 15px; line-height: 18px; text-align: center; }
.caret { border: 4px solid transparent; border-top: 5px solid #333; border-bottom: 0; margin-left: 7px; }
.avatar { width: 24px; height: 24px; margin-left: 12px; }
.user { margin-left: 6px; width: 88px; font-size: 14.500px; letter-spacing: -.15px; }
.user + .caret { margin-right: 6px; }

/* workspace */
.work { flex: 1; min-height: 0; display: flex; }
.rail { width: 40px; background: #fafafa; border-right: 1px solid #ccc; border-top: 1px solid #ccc; display: flex; flex-direction: column; align-items: center; padding-top: 7px; position: relative; height: 871px; z-index: 2; }
.rail svg { width: 20px; height: 20px; margin-bottom: 15px; }
.rail i { width: 39px; height: 1px; background: #ccc; margin: -7px 0 7px; }
.rail .railfind { margin-bottom: 5px; }
.main { flex: 1; display: flex; flex-direction: column; }
.tools { height: 36px; display: flex; align-items: center; background: #fff; }
.tools > svg { width: 20px; height: 20px; margin: 0 7px; }
.tools > svg:first-child { margin-right: 8px; }
.tools > i { width: 4px; height: 26px; border: solid #fff; border-width: 0 1px; background: #d4d4d4; }
.insert { width: 78px; display: flex; align-items: center; font-size: 14px; padding-left: 9px; gap: 5px; }
.insert svg { width: 17px; height: 20px; }
.search { margin-left: 11px; width: 160px; height: 32px; background: #eee; border-radius: 3px; display: flex; align-items: center; padding-left: 10px; font-size: 14px; color: #555; letter-spacing: -.1px; white-space: nowrap; }
kbd { font: 11px Roboto, sans-serif; letter-spacing: -.1px; border: 1px solid #aaa; border-bottom-width: 2px; border-radius: 2px; width: 17px; height: 18px; text-align: center; line-height: 15px; margin-top: 2px; }
.search kbd:first-of-type { margin-left: 3px; width: 33px; }
.body { flex: 1; min-height: 0; display: flex; }
.panel { width: 206px; border: solid #ccc; border-width: 1px 1px 1px 0; font-size: 14px; color: #555; letter-spacing: -.2px; white-space: nowrap; }
.filter { display: flex; align-items: center; padding: 7px 0 0 10px; height: 37px; }
.filter > svg { width: 16px; height: 16px; }
.field { width: 122px; height: 30px; border: 1px solid #999; border-radius: 4px; margin: 0 13px; padding-left: 6px; font-style: italic; font-size: 13.500px; color: #777; line-height: 28px; }
.insthead { height: 30px; display: flex; justify-content: space-between; align-items: center; padding: 0 11px 0 4px; font-size: 13.500px; letter-spacing: -.1px; color: #222; }
.insthead b { font-weight: 500; }
.insthead svg { width: 18px; height: 14px; }
.row { height: 26px; display: flex; align-items: center; padding: 1px 0 0 5px; }
.row .chev { width: 10px; height: 12px; margin-right: 11px; }
.row .i16 { margin-right: 4px; width: 15px; padding: 0; }
.nm { width: 87px; margin-left: 1px; }
.i16 + span:not(.nm) { margin-left: 1px; }
.dof { width: 14px; height: 18px; margin-bottom: 3px; }
.root .nm { width: 88px; }
.origin { padding-left: 29px; }
.origin svg { width: 9px; height: 9px; margin-right: 8px; }
.mates span { margin-left: 7px; color: #333; }
.open { width: 12px; height: 8px; margin-left: -1px; }
.kids { border-left: 1px solid #ccc; margin-left: 9px; color: #999; position: relative; }
.kids::after { content: ""; position: absolute; left: -5px; bottom: -1px; width: 9px; height: 1px; background: #ccc; }
.kids .row { padding-left: 14px; letter-spacing: -.3px; }
.kids .mi { width: 16px; height: 18px; margin-right: 5px; }
.kids .chev { margin-right: 10px; }
.view { flex: 1; position: relative; display: flex; }
.scene { width: 1674px; height: 805px; }
.axis { font: 38px "Liberation Sans", sans-serif; }
.az { fill: #4040e8; stroke: #4040e8; }
.ax { fill: #d62828; stroke: #d62828; }
.ay { fill: #18a018; stroke: #18a018; }
.face { font: 28px "DejaVu Sans", sans-serif; fill: #333; }
.fi { font-style: oblique; }
.flyout { position: absolute; left: -1px; top: 377px; width: 33px; height: 34px; background: #fff; border: 1px solid #999; border-left: 0; padding: 8px 0 0 8px; }
.flyout svg { width: 18px; height: 18px; }
.dock { position: absolute; right: 0; top: 311px; width: 32px; border: 1px solid #999; border-width: 1px 0 0 1px; background: #fff; }
.dock span { height: 33px; display: flex; align-items: center; padding-left: 6px; border-bottom: 1px solid #999; }
.dock svg { width: 19px; height: 19px; }

/* document tabs */
.doctabs { height: 30px; margin-left: 40px; background: #d8d8d8; display: flex; gap: 2px; border-bottom: 1px solid #bbb; font-size: 14px; letter-spacing: -.08px; color: #666; white-space: nowrap; }
.add { width: 37px; display: flex; align-items: center; justify-content: center; padding-right: 4px; }
.add svg { width: 16px; height: 16px; }
.dt { width: 200px; height: 28px; background: #e9e9e9; border-radius: 0 0 5px 5px; display: flex; align-items: center; padding-left: 11px; gap: 5px; box-shadow: 0 1px 2px #aaa; }
.dt svg { width: 17px; height: 18px; }
.dt.on { background: #fff; color: #333; border-bottom: 2px solid #1651b0; padding-top: 2px; }

/* taskbar */
.taskbar { height: 48px; background: #1c1c1c; color: #fff; display: flex; align-items: center; padding-left: 13px; font-family: "Open Sans", sans-serif; font-size: 12px; letter-spacing: -.3px; }
.taskbar > span:not(.grow):not(.clock) { width: 38px; height: 40px; margin-right: 6.200px; display: flex; align-items: center; justify-content: center; border-radius: 4px; position: relative; }
.taskbar > span svg { width: 24px; height: 24px; }
.taskbar .cur { background: #2c2c2c; }
.cur::after, .run::after { content: ""; position: absolute; bottom: 1px; left: 11px; width: 16px; height: 3px; border-radius: 2px; background: #4cc2ff; }
.run::after { left: 16px; width: 6px; background: #999; }
.up { width: 12px; height: 12px; margin-right: 20px; }
.lang { font-weight: 400; width: 40px; }
.net, .vol { width: 17px; height: 17px; }
.vol { margin-left: 7px; }
.clock { width: 72px; text-align: right; line-height: 16px; }
.bell { width: 14px; height: 16px; margin: 0 22px 0 8px; }
```
